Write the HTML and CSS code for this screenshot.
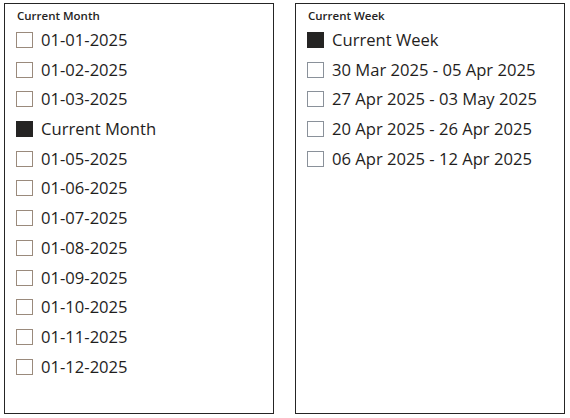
FILE: index.html
```html
<!DOCTYPE html>
<html>
<head>
<meta charset="utf-8">
<link rel="stylesheet" href="styles.css">
</head>
<body>
<div class="board">
  <section class="slicer">
    <div class="title">Current Month</div>
    <ul class="items">
      <li class="item"><span class="box"></span><span class="label">01-01-2025</span></li>
      <li class="item"><span class="box"></span><span class="label">01-02-2025</span></li>
      <li class="item"><span class="box"></span><span class="label">01-03-2025</span></li>
      <li class="item"><span class="box checked"></span><span class="label">Current Month</span></li>
      <li class="item"><span class="box"></span><span class="label">01-05-2025</span></li>
      <li class="item"><span class="box"></span><span class="label">01-06-2025</span></li>
      <li class="item"><span class="box"></span><span class="label">01-07-2025</span></li>
      <li class="item"><span class="box"></span><span class="label">01-08-2025</span></li>
      <li class="item"><span class="box"></span><span class="label">01-09-2025</span></li>
      <li class="item"><span class="box"></span><span class="label">01-10-2025</span></li>
      <li class="item"><span class="box"></span><span class="label">01-11-2025</span></li>
      <li class="item"><span class="box"></span><span class="label">01-12-2025</span></li>
    </ul>
  </section>
  <section class="slicer">
    <div class="title">Current Week</div>
    <ul class="items">
      <li class="item"><span class="box checked"></span><span class="label">Current Week</span></li>
      <li class="item"><span class="box blue"></span><span class="label">30 Mar 2025 - 05 Apr 2025</span></li>
      <li class="item"><span class="box blue"></span><span class="label">27 Apr 2025 - 03 May 2025</span></li>
      <li class="item"><span class="box blue"></span><span class="label">20 Apr 2025 - 26 Apr 2025</span></li>
      <li class="item"><span class="box blue"></span><span class="label">06 Apr 2025 - 12 Apr 2025</span></li>
    </ul>
  </section>
</div>
</body>
</html>
```
FILE: styles.css
```css
html, body {
  margin: 0;
  padding: 0;
  background: #ffffff;
}
body {
  font-family: "Open Sans", "Noto Sans", sans-serif;
  color: #252423;
}
.board {
  display: flex;
  gap: 21px;
  padding: 3px 0 0 4px;
}
.slicer {
  box-sizing: border-box;
  width: 270px;
  height: 411px;
  border: 1px solid #252525;
  box-shadow: 0 1px 0 #a0a0a0;
  padding: 4px 11px 0 11px;
}
.title {
  font-size: 11.5px;
  font-weight: 600;
  line-height: 16px;
  margin-left: 1px;
  color: #252423;
}
.items {
  list-style: none;
  margin: 1px 0 0 0;
  padding: 0;
}
.item {
  display: flex;
  align-items: center;
  height: 29.73px;
}
.box {
  box-sizing: border-box;
  flex: none;
  width: 17px;
  height: 16px;
  border: 1px solid #9a8a7c;
  margin-right: 8px;
}
.box.blue {
  border-color: #8a919a;
}
.box.checked {
  background: #252423;
  border-color: #252423;
}
.label {
  font-size: 16.6px;
  line-height: 20px;
  white-space: nowrap;
  color: #1f1e1d;
}
```
